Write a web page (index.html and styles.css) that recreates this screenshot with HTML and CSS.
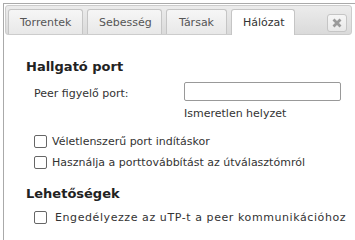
FILE: index.html
```html
<!DOCTYPE html>
<html lang="hu">
<head>
<meta charset="utf-8">
<link rel="stylesheet" href="styles.css">
</head>
<body>
<div class="dialog">
  <div class="tabbar">
    <ul class="tabs">
      <li class="tab">Torrentek</li>
      <li class="tab">Sebesség</li>
      <li class="tab">Társak</li>
      <li class="tab active">Hálózat</li>
    </ul>
    <button class="close" aria-label="Bezárás">
      <svg width="10" height="10" viewBox="0 0 10 10"><path d="M1.5 1.5 L8.5 8.5 M8.5 1.5 L1.5 8.5" stroke="#9a9a9a" stroke-width="2.8" stroke-linecap="butt"/></svg>
    </button>
  </div>
  <div class="content">
    <h3 class="section">Hallgató port</h3>
    <div class="row">
      <label class="label">Peer figyelő port:</label>
      <div class="field">
        <input class="input" type="text">
        <div class="status">Ismeretlen helyzet</div>
      </div>
    </div>
    <label class="check first"><span class="box"></span>Véletlenszerű port indításkor</label>
    <label class="check"><span class="box"></span>Használja a porttovábbítást az útválasztómról</label>
    <h3 class="section second">Lehetőségek</h3>
    <label class="check wide"><span class="box"></span>Engedélyezze az uTP-t a peer kommunikációhoz</label>
  </div>
</div>
</body>
</html>
```
FILE: styles.css
```css
html, body { margin: 0; padding: 0; background: #fff; }
body { font-family: "DejaVu Sans", Verdana, sans-serif; font-size: 11px; color: #333; overflow: hidden; height: 240px; }
.dialog {
  margin: 3px 0 0 3px;
  width: 352px;
  height: 237px;
  border-left: 1px solid #aaa;
  border-top: 1px solid #aaa;
  padding: 1px 0 0 1px;
  box-sizing: border-box;
  overflow: hidden;
}
.tabbar {
  width: 347px;
  height: 30px;
  box-sizing: border-box;
  border: 1px solid #ccc;
  border-radius: 3px;
  background: linear-gradient(#ececec, #dadada);
  display: flex;
  align-items: flex-end;
  justify-content: space-between;
  padding: 0 4px 0 2px;
}
.tabs { list-style: none; margin: 0; padding: 0; display: flex; gap: 4px; margin-bottom: -1px; }
.tab {
  height: 25px;
  box-sizing: border-box;
  border: 1px solid #c5c5c5;
  border-bottom: none;
  border-radius: 3px 3px 0 0;
  background: linear-gradient(#f6f6f6, #e8e8e8);
  color: #555;
  padding: 6px 11px 0;
  width: 75px;
  text-align: center;
}
.tab:nth-child(3) { width: 61px; }
.tab:nth-child(4) { width: 64px; }
.tab.active { background: #fff; height: 26px; color: #333; }
.close {
  width: 20px; height: 18px;
  margin-bottom: 2px;
  border: 1px solid #c5c5c5;
  border-radius: 3px;
  background: linear-gradient(#f6f6f6, #e8e8e8);
  display: flex; align-items: center; justify-content: center;
  padding: 0;
}
.content { padding: 16px 0 0 21px; }
.section { font-size: 13px; font-weight: bold; color: #222; margin: 8px 0 9px; }
.section.second { margin-top: 17px; margin-bottom: 10px; }
.row { display: flex; padding-left: 8px; }
.label { width: 150px; padding-top: 4px; }
.input { width: 157px; height: 19px; box-sizing: border-box; border: 1px solid #999; border-radius: 2px; margin: -1px 0 0; padding: 0; }
.status { margin-top: 6px; }
.check { display: flex; align-items: center; padding-left: 8px; margin-top: 8px; height: 13px; white-space: nowrap; }
.check.first { margin-top: 15px; }
.box { width: 11px; height: 11px; border: 1px solid #666; border-radius: 2px; margin-right: 5px; flex: none; }
.check.wide { letter-spacing: 0.58px; }
.check.wide .box { margin-right: 8px; }
```
